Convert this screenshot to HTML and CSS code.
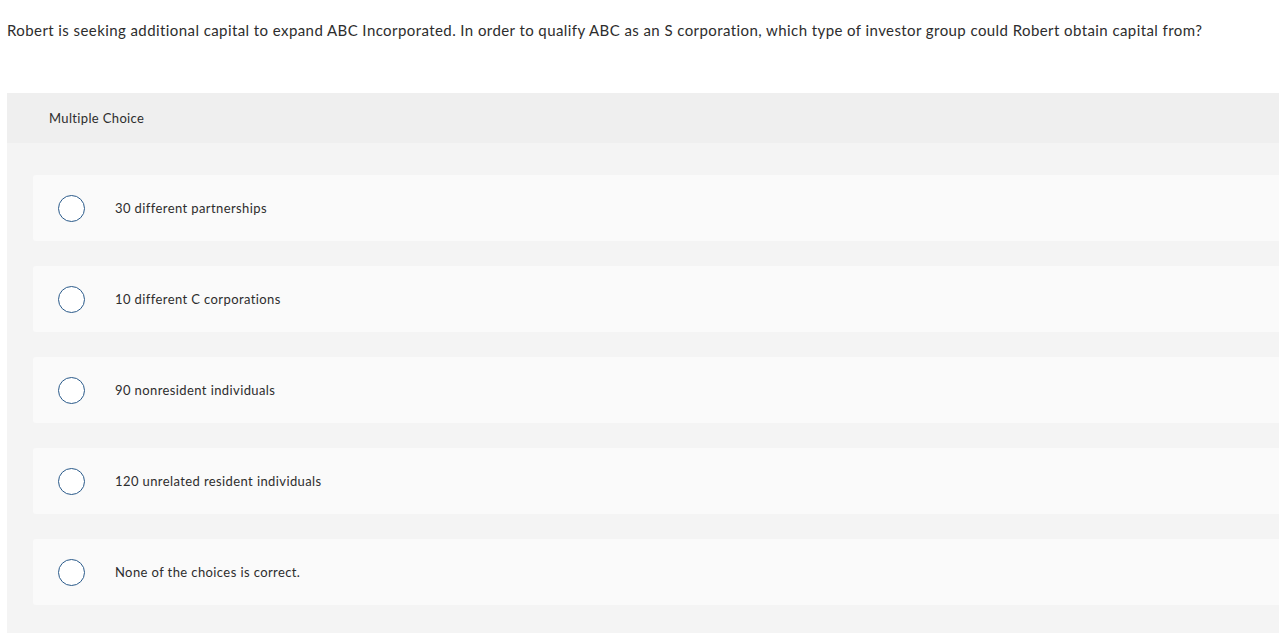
FILE: index.html
```html
<!DOCTYPE html>
<html lang="en">
<head>
<meta charset="utf-8">
<title>Multiple Choice</title>
<link rel="stylesheet" href="styles.css">
</head>
<body>
<div class="page">
  <p class="question">Robert is seeking additional capital to expand ABC Incorporated. In order to qualify ABC as an S corporation, which type of investor group could Robert obtain capital from?</p>
  <section class="panel">
    <div class="panel-head">Multiple Choice</div>
    <div class="choices">
      <label class="choice"><span class="radio"></span><span class="choice-text">30 different partnerships</span></label>
      <label class="choice"><span class="radio"></span><span class="choice-text">10 different C corporations</span></label>
      <label class="choice"><span class="radio"></span><span class="choice-text">90 nonresident individuals</span></label>
      <label class="choice"><span class="radio"></span><span class="choice-text">120 unrelated resident individuals</span></label>
      <label class="choice"><span class="radio"></span><span class="choice-text">None of the choices is correct.</span></label>
    </div>
  </section>
</div>
</body>
</html>
```

FILE: styles.css
```css
html, body {
  margin: 0;
  padding: 0;
  background: #fff;
  overflow: hidden;
}
body {
  font-family: "Lato", "Liberation Sans", sans-serif;
  color: #333;
}
.page {
  padding-left: 7px;
  width: 1300px;
}
.question {
  margin: 0;
  padding-top: 20px;
  height: 93px;
  box-sizing: border-box;
  font-size: 15px;
  line-height: 20px;
  letter-spacing: 0.42px;
  color: #2d2d2d;
}
.panel {
  background: #f4f4f4;
  padding-bottom: 28px;
}
.panel-head {
  background: #efefef;
  height: 50px;
  display: flex;
  align-items: center;
  padding-left: 42px;
  font-size: 13px;
  letter-spacing: 0.35px;
  color: #2d2d2d;
}
.choices {
  padding: 32px 0 0 26px;
  display: flex;
  flex-direction: column;
  gap: 25px;
}
.choice {
  background: #fafafa;
  border-radius: 3px;
  height: 66px;
  display: flex;
  align-items: center;
  padding-left: 25px;
}
.radio {
  width: 25px;
  height: 25px;
  border: 1.5px solid #2a5a8a;
  border-radius: 50%;
  background: #fff;
  flex: none;
}
.choice-text {
  margin-left: 30px;
  font-size: 13px;
  letter-spacing: 0.4px;
  color: #2d2d2d;
}
```
